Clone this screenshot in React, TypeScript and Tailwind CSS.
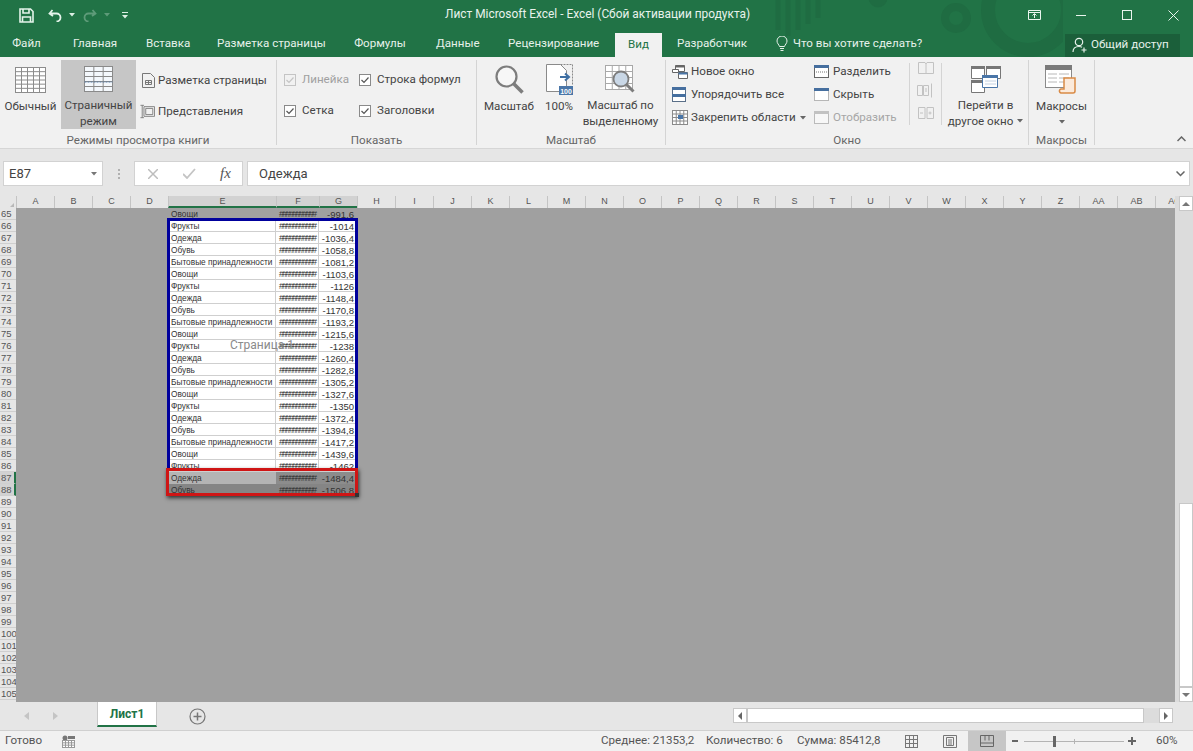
import type { ReactNode } from "react"

const COLS = [
  { n: "A", w: "w-[38px]" }, { n: "B", w: "w-[38px]" }, { n: "C", w: "w-[38px]" }, { n: "D", w: "w-[38px]" },
  { n: "E", w: "w-[108px]", on: true }, { n: "F", w: "w-[43px]", on: true }, { n: "G", w: "w-[38px]", on: true },
  ...["H", "I", "J", "K", "L", "M", "N", "O", "P", "Q", "R", "S", "T", "U", "V", "W", "X", "Y", "Z", "AA", "AB", "AC"].map((n) => ({ n, w: "w-[38px]" })),
]

const ROW_NUMS = Array.from({ length: 41 }, (_, i) => 65 + i)

const NAMES = ["Овощи", "Фрукты", "Одежда", "Обувь", "Бытовые принадлежности"]
const VALUES = ["-991,6", "-1014", "-1036,4", "-1058,8", "-1081,2", "-1103,6", "-1126", "-1148,4", "-1170,8", "-1193,2", "-1215,6", "-1238", "-1260,4", "-1282,8", "-1305,2", "-1327,6", "-1350", "-1372,4", "-1394,8", "-1417,2", "-1439,6", "-1462", "-1484,4", "-1506,8"]

const TABS = [
  { t: "Файл", c: "ml-[12px] w-[29px]" },
  { t: "Главная", c: "ml-[32px] w-[44px]" },
  { t: "Вставка", c: "ml-[29px] w-[42px]" },
  { t: "Разметка страницы", c: "ml-[29px] w-[107px]" },
  { t: "Формулы", c: "ml-[29px] w-[54px]" },
  { t: "Данные", c: "ml-[29px] w-[43px]" },
  { t: "Рецензирование", c: "ml-[29px] w-[91px]" },
]

function Grid({ x, y, w, h, cx, cy, stroke = "#7a7a7a", fill = "#fff" }: { x: number; y: number; w: number; h: number; cx: number; cy: number; stroke?: string; fill?: string }) {
  const v = Array.from({ length: cx - 1 }, (_, i) => x + ((i + 1) * w) / cx)
  const hz = Array.from({ length: cy - 1 }, (_, i) => y + ((i + 1) * h) / cy)
  return (
    <g stroke={stroke} strokeWidth="1" fill="none">
      <rect x={x} y={y} width={w} height={h} fill={fill} />
      {v.map((p) => <path key={p} d={`M${p} ${y}V${y + h}`} />)}
      {hz.map((p) => <path key={p} d={`M${x} ${p}H${x + w}`} />)}
    </g>
  )
}

function Caret({ color = "#666" }: { color?: string }) {
  return <svg width="6" height="4" viewBox="0 0 6 4"><path d="M0 0h6L3 3.5z" fill={color} /></svg>
}

function Check({ off }: { off?: boolean }) {
  return (
    <svg width="12" height="12" viewBox="0 0 12 12" className="shrink-0">
      <rect x=".5" y=".5" width="11" height="11" fill={off ? "#f1f1f1" : "#fff"} stroke={off ? "#c4c4c4" : "#8a8a8a"} />
      <path d="M2.5 6l2.5 2.5 4.5-5" fill="none" stroke={off ? "#c4c4c4" : "#555"} strokeWidth="1.2" />
    </svg>
  )
}

function CheckRow({ label, off }: { label: string; off?: boolean }) {
  return (
    <div className="flex h-[22px] items-center gap-[6px]">
      <Check off={off} />
      <span className={off ? "text-[#a0a0a0]" : ""}>{label}</span>
    </div>
  )
}

function Big({ icon, lines, on, w, caret }: { icon: ReactNode; lines: string[]; on?: boolean; w: string; caret?: boolean }) {
  return (
    <div className={`flex h-[69px] shrink-0 flex-col items-center ${w} ${on ? "bg-[#c6c6c6]" : ""}`}>
      <div className="flex h-[38px] items-center justify-center pt-[1px]">{icon}</div>
      {lines.map((l, i) => (
        <div key={l} className="flex h-[16px] items-center gap-[4px] whitespace-nowrap leading-[16px]">
          {l}
          {caret && i === lines.length - 1 && <Caret />}
        </div>
      ))}
    </div>
  )
}

function Cmd({ icon, label, off, caret, w }: { icon: ReactNode; label: string; off?: boolean; caret?: boolean; w?: string }) {
  return (
    <div className={`flex h-[23px] items-center ${w ?? ""} ${off ? "text-[#a6a6a6]" : ""}`}>
      <span className="flex w-[19px] shrink-0 items-center">{icon}</span>
      <span className="whitespace-nowrap">{label}</span>
      {caret && <span className="ml-[4px] flex"><Caret /></span>}
    </div>
  )
}

function Sep({ h = "h-[85px]" }: { h?: string }) {
  return <div className={`mt-[3px] w-px shrink-0 bg-[#d4d4d4] ${h}`} />
}

function GroupLabel({ children }: { children: ReactNode }) {
  return <div className="flex h-[16px] items-center justify-center whitespace-nowrap text-[#666]">{children}</div>
}

function TitleBar() {
  return (
    <div className="flex h-[30px] items-center text-[#e8f2ec]">
      <div className="flex w-[445px] items-center">
        <svg width="15" height="15" viewBox="0 0 15 15" className="ml-[19px]" fill="none" stroke="#e4f4ea" strokeWidth="1.6">
          <path d="M1 1h10.5L14 3.5V14H1z" />
          <path d="M4 1v4h6V1M3.5 14V9h8v5" />
        </svg>
        <svg width="15" height="13" viewBox="0 0 15 13" className="ml-[14px]" fill="none" stroke="#e4f4ea" strokeWidth="1.8">
          <path d="M4.5 1L1.5 4.5l3.5 2.5M2 4.5h6.5a4 4 0 010 8" />
        </svg>
        <span className="ml-[6px] flex"><Caret color="#dcefe4" /></span>
        <svg width="15" height="13" viewBox="0 0 15 13" className="ml-[7px] opacity-35" fill="none" stroke="#cfe6d8" strokeWidth="1.8">
          <path d="M10.5 1l3 3.5-3.5 2.5M13 4.5H6.5a4 4 0 000 8" />
        </svg>
        <span className="ml-[7px] flex opacity-35"><Caret color="#cfe6d8" /></span>
        <svg width="6" height="7" viewBox="0 0 6 7" className="ml-[12px]">
          <path d="M0 0h6v1H0zM0 3h6L3 6.500z" fill="#dcefe4" />
        </svg>
      </div>
      <div className="w-[583px] whitespace-nowrap text-[11.9px]">Лист Microsoft Excel - Excel (Сбой активации продукта)</div>
      <div className="flex items-center">
        <svg width="13" height="10" viewBox="0 0 13 10" fill="none" stroke="#eaf5ee">
          <path d="M.5.5h12v9H.5zM.5 2.500h12M6.500 8V4M4.500 5.500l2-2 2 2" />
        </svg>
        <svg width="10" height="10" viewBox="0 0 10 10" className="ml-[35px]" stroke="#eaf5ee"><path d="M0 5.500h10" /></svg>
        <svg width="10" height="10" viewBox="0 0 10 10" className="ml-[36px]" fill="none" stroke="#eaf5ee"><rect x=".5" y=".5" width="9" height="9" /></svg>
        <svg width="11" height="11" viewBox="0 0 11 11" className="ml-[36px]" stroke="#eaf5ee"><path d="M.5.5l10 10M10.500.5l-10 10" /></svg>
      </div>
    </div>
  )
}

function TabRow() {
  return (
    <div className="flex h-[27px] items-center text-[11.6px] text-[#e6f1ea]">
      {TABS.map((t) => <span key={t.t} className={`shrink-0 whitespace-nowrap text-center ${t.c}`}>{t.t}</span>)}
      <span className="ml-[16px] mt-[3px] flex h-[24px] w-[47px] shrink-0 items-center justify-center bg-[#f1f1f1] text-[#217346]">Вид</span>
      <span className="ml-[15px] w-[70px] shrink-0 whitespace-nowrap text-center">Разработчик</span>
      <svg width="12" height="15" viewBox="0 0 12 15" className="ml-[29px] shrink-0" fill="none" stroke="#e6f1ea">
        <path d="M3.500 10.500C3 8.500 1 7.500 1 5a5 5 0 0110 0c0 2.500-2 3.500-2.500 5.500zM4 12.500h4M4.500 14.500h3" />
      </svg>
      <span className="ml-[5px] w-[127px] shrink-0 whitespace-nowrap">Что вы хотите сделать?</span>
      <div className="ml-[145px] mt-[3px] flex h-[23px] w-[115px] shrink-0 items-center bg-[#1b5f3a] pl-[7px]">
        <svg width="16" height="16" viewBox="0 0 16 16" fill="none" stroke="#e6f1ea" strokeWidth="1.2">
          <circle cx="7" cy="5" r="3.700" />
          <path d="M1 15c0-3.500 2.500-5.500 6-5.500 1.200 0 2.200.2 3 .7M12 10.500v5M9.500 13h5" />
        </svg>
        <span className="ml-[3px] whitespace-nowrap">Общий доступ</span>
      </div>
    </div>
  )
}

function Ribbon() {
  return (
    <div className="flex h-[92px] items-start border-b border-[#d6d6d6] bg-[#f1f1f1] text-[11.6px] text-[#444]">
      {/* book views */}
      <div className="flex w-[276px] shrink-0 flex-col pt-[3px]">
        <div className="flex h-[73px]">
          <Big w="w-[61px]" lines={["Обычный"]} icon={<svg width="31" height="26" viewBox="0 0 31 26"><Grid x={.5} y={.5} w={30} h={25} cx={5} cy={6} stroke="#8c8c8c" /></svg>} />
          <Big w="w-[75px]" on lines={["Страничный", "режим"]} icon={
            <svg width="29" height="26" viewBox="0 0 29 26">
              <Grid x={.5} y={.5} w={28} h={25} cx={3} cy={5} stroke="#8a8a8a" fill="#f4f8fc" />
              <path d="M.5 16h28" stroke="#5b7fa6" strokeDasharray="2 1" />
            </svg>
          } />
          <div className="flex flex-col pl-[4px] pt-[9px]">
            <div className="flex h-[23px] items-center">
              <svg width="13" height="15" viewBox="0 0 13 15" className="ml-[2px] mr-[3px]" fill="none" stroke="#777">
                <path d="M.5.5h8l4 4v10H.5zM3.500 7.500h6v4h-6zM6.500 7.500v4M3.500 9.500h6" />
              </svg>
              <span className="whitespace-nowrap">Разметка страницы</span>
            </div>
            <div className="mt-[8px] flex h-[23px] items-center">
              <svg width="15" height="15" viewBox="0 0 17 16" className="mr-[3px]" fill="none" stroke="#777">
                <path d="M4.500 2.500h12v11h-12zM6.500 4.500h8v7h-8zM2.500 1v14M.5 1h4M.5 15h4" />
              </svg>
              <span className="whitespace-nowrap">Представления</span>
            </div>
          </div>
        </div>
        <GroupLabel>Режимы просмотра книги</GroupLabel>
      </div>
      <Sep />

      {/* show */}
      <div className="flex w-[199px] shrink-0 flex-col pt-[12px]">
        <div className="flex h-[64px] pl-[7px]">
          <div className="flex w-[75px] flex-col gap-[9px]">
            <CheckRow label="Линейка" off />
            <CheckRow label="Сетка" />
          </div>
          <div className="flex flex-col gap-[9px]">
            <CheckRow label="Строка формул" />
            <CheckRow label="Заголовки" />
          </div>
        </div>
        <GroupLabel>Показать</GroupLabel>
      </div>
      <Sep />

      {/* zoom */}
      <div className="flex w-[188px] shrink-0 flex-col pt-[3px]">
        <div className="flex h-[73px] pl-[3px]">
          <Big w="w-[58px]" lines={["Масштаб"]} icon={
            <svg width="29" height="29" viewBox="0 0 29 29" fill="none" stroke="#7d7d7d">
              <circle cx="11.500" cy="11.500" r="10" strokeWidth="2.200" fill="#f7f7f7" />
              <path d="M18.500 18.500l9 9" strokeWidth="3.500" />
            </svg>
          } />
          <Big w="w-[42px]" lines={["100%"]} icon={
            <svg width="27" height="31" viewBox="0 0 27 31">
              <path d="M.5.500h14l6 6v21H.5z" fill="#fff" stroke="#8a8a8a" />
              <path d="M14.500.5h12v20" fill="none" stroke="#8a8a8a" strokeDasharray="2 1" />
              <path d="M14 13h8M19 9.500l4 3.500-4 3.500" fill="none" stroke="#3f6fa3" strokeWidth="2" />
              <rect x="13" y="22" width="14" height="9" fill="#4a76a8" />
              <text x="20" y="29.500" textAnchor="middle" fontSize="7" fontWeight="700" fill="#fff" fontFamily="Liberation Sans, sans-serif">100</text>
            </svg>
          } />
          <Big w="w-[81px]" lines={["Масштаб по", "выделенному"]} icon={
            <svg width="31" height="29" viewBox="0 0 31 29" fill="none">
              <Grid x={.5} y={.5} w={27} h={24} cx={4} cy={4} stroke="#a8a8a8" />
              <circle cx="16" cy="14" r="7.500" stroke="#7d7d7d" strokeWidth="1.800" fill="#c9d7e6" />
              <path d="M21.500 19.500l7 7" stroke="#7d7d7d" strokeWidth="3" />
            </svg>
          } />
        </div>
        <GroupLabel>Масштаб</GroupLabel>
      </div>
      <Sep />

      {/* window */}
      <div className="flex w-[362px] shrink-0 flex-col pt-[3px]">
        <div className="flex h-[73px]">
          <div className="flex w-[148px] shrink-0 flex-col pl-[6px]">
            <Cmd label="Новое окно" icon={
              <svg width="16" height="14" viewBox="0 0 16 14">
                <path d="M3.500.5h9v6h-9z" fill="#fff" stroke="#666" /><path d="M3.500.5h9v2h-9z" fill="#666" />
                <path d="M.5 4.500h6v3h-6z" fill="#fff" stroke="#666" />
                <path d="M6.500 7.500h9v6h-9z" fill="#fff" stroke="#666" /><path d="M6.500 7.500h9v2h-9z" fill="#4a76a8" />
              </svg>
            } />
            <Cmd label="Упорядочить все" icon={
              <svg width="14" height="15" viewBox="0 0 14 15">
                <rect x=".5" y=".5" width="13" height="14" fill="#fff" stroke="#5a6f88" />
                <path d="M0 0h14v3H0zM0 7h14v3H0z" fill="#466f9f" />
              </svg>
            } />
            <Cmd label="Закрепить области" caret icon={
              <svg width="16" height="15" viewBox="0 0 16 15">
                <Grid x={.5} y={.5} w={15} h={14} cx={4} cy={4} stroke="#8a8a8a" />
                <rect x="6" y="5" width="5" height="4" fill="#4a76a8" />
              </svg>
            } />
          </div>
          <div className="flex w-[95px] shrink-0 flex-col">
            <Cmd w="w-[90px]" label="Разделить" icon={
              <svg width="15" height="13" viewBox="0 0 15 13">
                <rect x=".5" y=".5" width="14" height="12" fill="#fff" stroke="#666" />
                <path d="M0 0h15v3H0z" fill="#466f9f" /><path d="M2 7h11" stroke="#777" strokeDasharray="1 1" />
              </svg>
            } />
            <Cmd label="Скрыть" icon={
              <svg width="15" height="13" viewBox="0 0 15 13">
                <rect x=".5" y=".5" width="14" height="12" fill="#fff" stroke="#777" strokeDasharray="1 1" />
                <path d="M0 0h15v3H0z" fill="#466f9f" />
              </svg>
            } />
            <Cmd off label="Отобразить" icon={
              <svg width="15" height="13" viewBox="0 0 15 13">
                <rect x=".5" y=".5" width="14" height="12" fill="#f7f7f7" stroke="#bbb" />
                <path d="M0 0h15v3H0z" fill="#c2c2c2" />
              </svg>
            } />
          </div>
          <Sep h="h-[62px]" />
          <div className="flex w-[31px] shrink-0 flex-col items-center gap-[9px] pt-[2px]">
            <svg width="16" height="12" viewBox="0 0 16 12" fill="none" stroke="#c2c2c2"><path d="M.5.500h6.500l1 1.500v9.500h-7.500zM8 2l1-1.500h6.500v11H8" /></svg>
            <svg width="17" height="15" viewBox="0 0 17 15" fill="none" stroke="#c2c2c2"><path d="M.5 2.500h5v10h-5zM6.500 2.500h5v10h-5zM8 6h2M8 8h2M14.500.5v14" /></svg>
            <svg width="16" height="12" viewBox="0 0 16 12" fill="none" stroke="#c2c2c2"><path d="M.5.500h6.500v11H.5zM9 .5h6.500v11H9zM2 6h3M10.500 6h3M12 4.500v3" /></svg>
          </div>
          <Sep h="h-[62px]" />
          <Big w="w-[87px]" caret lines={["Перейти в", "другое окно"]} icon={
            <svg width="30" height="27" viewBox="0 0 30 27">
              <path d="M.5.500h13v12H.5zM15.500.5h14v12h-14zM.5 14.500h13v12H.5z" fill="#fff" stroke="#777" />
              <path d="M0 0h14v3H0zM15 0h15v3H15zM0 14h14v3H0z" fill="#777" />
              <path d="M11.500 9.500h15v12h-15z" fill="#fff" stroke="#4a76a8" />
              <path d="M11 9h16v3H11z" fill="#4a76a8" />
              <path d="M14 15h11M14 18h11" stroke="#c4d2e2" />
            </svg>
          } />
        </div>
        <GroupLabel>Окно</GroupLabel>
      </div>
      <Sep />

      {/* macros */}
      <div className="flex w-[65px] shrink-0 flex-col pt-[3px]">
        <div className="flex h-[73px] flex-col items-center">
          <div className="flex h-[38px] items-center pt-[1px]">
            <svg width="33" height="29" viewBox="0 0 33 29">
              <rect x=".5" y=".5" width="26" height="22" fill="#fff" stroke="#8a8a8a" />
              <path d="M0 0h27v5H0z" fill="#7a7a7a" />
              <path d="M3 9h9M14 9h10M3 13h9M14 13h10M3 17h9M14 17h10" stroke="#b8b8b8" />
              <path d="M19 13h11v13a2 2 0 01-2 2H17a2 2 0 01-1-4h3z" fill="#fbeadb" stroke="#d98a45" strokeWidth="1.500" />
            </svg>
          </div>
          <div className="flex h-[16px] items-center leading-[16px]">Макросы</div>
          <div className="flex h-[16px] items-center"><Caret /></div>
        </div>
        <GroupLabel>Макросы</GroupLabel>
      </div>
      <Sep />

      <div className="flex h-[91px] flex-1 items-end justify-end pb-[6px] pr-[7px]">
        <svg width="9" height="6" viewBox="0 0 9 6" fill="none" stroke="#666" strokeWidth="1.500"><path d="M.5 5l4-4 4 4" /></svg>
      </div>
    </div>
  )
}

function FormulaBar() {
  return (
    <div className="flex h-[47px] items-start bg-[#e6e6e6] pt-[12px] text-[14px] text-[#444]">
      <div className="ml-[3px] flex h-[25px] w-[100px] items-center justify-between border border-[#d2d2d2] bg-white pl-[5px] pr-[5px] text-[13px]">
        E87
        <Caret color="#777" />
      </div>
      <div className="flex h-[25px] w-[31px] flex-col items-center justify-center gap-[2px]">
        {[0, 1, 2].map((i) => <span key={i} className="h-[2px] w-[2px] bg-[#b0b0b0]" />)}
      </div>
      <div className="flex h-[25px] w-[109px] items-center border border-[#d2d2d2] bg-white">
        <svg width="10" height="10" viewBox="0 0 10 10" className="ml-[13px]" stroke="#bdbdbd" strokeWidth="1.500"><path d="M0 0l10 10M10 0L0 10" /></svg>
        <svg width="13" height="11" viewBox="0 0 13 11" className="ml-[25px]" fill="none" stroke="#c4c4c4" strokeWidth="1.800"><path d="M0 6l4 4 8-9" /></svg>
        <span className="ml-[24px] font-['Liberation_Serif',serif] text-[15px] italic text-[#555]">fx</span>
      </div>
      <div className="ml-[4px] flex h-[25px] w-[943px] items-center justify-between border border-[#d2d2d2] bg-white pl-[11px] pr-[4px] text-[13px]">
        Одежда
        <svg width="9" height="6" viewBox="0 0 9 6" fill="none" stroke="#666" strokeWidth="1.500"><path d="M.5.500l4 4 4-4" /></svg>
      </div>
    </div>
  )
}

function ColumnHeader() {
  return (
    <div className="flex h-[12px] overflow-hidden bg-[#e6e6e6] font-['Liberation_Sans',sans-serif] text-[9px] leading-[11px] text-[#555]">
      <div className="flex w-[16px] shrink-0 items-end justify-end pb-[1px] pr-[2px]">
        <svg width="4" height="4" viewBox="0 0 4 4"><path d="M4 0v4H0z" fill="#b8b8b8" /></svg>
      </div>
      {COLS.map((c) => (
        <div key={c.n} className={`flex shrink-0 justify-center border-l border-[#c4c4c4] ${c.w} ${c.on ? "border-b-2 border-b-[#217346] bg-[#d2d2d2]" : ""}`}>
          {c.n}
        </div>
      ))}
    </div>
  )
}

function RowHeaders() {
  return (
    <div className="w-[16px] shrink-0 overflow-hidden bg-[#e6e6e6] font-['Liberation_Sans',sans-serif] text-[9.5px] text-[#555]">
      {ROW_NUMS.map((n) => (
        <div key={n} className={`flex h-[12px] items-center border-b border-[#cfcfcf] pl-[1px] leading-[11px] ${n === 87 || n === 88 ? "border-r-2 border-r-[#217346] bg-[#d2d2d2]" : ""}`}>
          {n}
        </div>
      ))}
    </div>
  )
}

function DataRow({ i }: { i: number }) {
  const n = 65 + i
  const first = n === 65
  const sel = n >= 87
  const bg = first ? "" : n === 87 ? "bg-[#8c8c8c]" : n === 88 ? "bg-[#858585]" : "bg-white"
  const line = first || sel ? "border-transparent" : "border-[#cfcfcf]"
  return (
    <div className={`flex h-[12px] w-[189px] leading-[13px] text-[#333] ${bg}`}>
      <div className={`w-[108px] overflow-hidden whitespace-nowrap border-b border-r pl-[3px] text-[8.3px] ${line} ${n === 87 ? "bg-[#b4b4b4]" : ""}`}>{NAMES[i % 5]}</div>
      <div className={`w-[43px] overflow-hidden whitespace-nowrap border-b border-r pl-[3px] text-[9px] tracking-[-1.7px] text-[#333] ${line}`}>###########</div>
      <div className={`w-[38px] border-b pr-[3px] text-right text-[9.5px] ${line}`}>{VALUES[i]}</div>
    </div>
  )
}

function Sheet() {
  return (
    <div className="relative flex-1 overflow-hidden bg-[#a0a0a0] pl-[152px] font-['Liberation_Sans',sans-serif]">
      {VALUES.map((_, i) => <DataRow key={i} i={i} />)}
      {/* print area frame and page watermark */}
      <div className="absolute left-[151px] top-[10px] h-[253px] w-[191px] border-[3px] border-[#00009c]" />
      <div className="absolute left-[214px] top-[130px] font-['Roboto',sans-serif] text-[12px] leading-[14px] text-[#8a8a8a]">Страница 1</div>
      <div className="absolute left-[150px] top-[260px] h-[28px] w-[192px] border-[3px] border-[#cf1515] shadow-[1px_2px_4px_rgba(0,0,0,0.7)]" />
      <div className="absolute left-[339px] top-[285px] h-[4px] w-[4px] bg-[#333]" />
    </div>
  )
}

function ScrollBtn({ up }: { up?: boolean }) {
  return (
    <div className="flex h-[15px] w-[14px] shrink-0 items-center justify-center border border-[#c8c8c8] bg-white">
      <svg width="8" height="4" viewBox="0 0 8 4"><path d={up ? "M0 4h8L4 0z" : "M0 0h8L4 4z"} fill="#777" /></svg>
    </div>
  )
}

function ScrollBar() {
  return (
    <div className="flex w-[18px] shrink-0 flex-col items-end bg-[#dcdcdc] pl-[3px]">
      <ScrollBtn up />
      <div className="flex-1" />
      <div className="h-[184px] w-[14px] border border-[#c8c8c8] bg-white" />
      <ScrollBtn />
    </div>
  )
}

function SheetBar() {
  return (
    <div className="flex h-[28px] items-start bg-[#e6e6e6] text-[12px]">
      <svg width="5" height="8" viewBox="0 0 5 8" className="ml-[24px] mt-[10px]"><path d="M5 0v8L0 4z" fill="#c4c4c4" /></svg>
      <svg width="5" height="8" viewBox="0 0 5 8" className="ml-[24px] mt-[10px]"><path d="M0 0v8l5-4z" fill="#c4c4c4" /></svg>
      <div className="ml-[39px] flex h-[25px] w-[60px] items-center justify-center border-b-2 border-x border-x-[#c8c8c8] border-b-[#217346] bg-white font-bold text-[#217346]">
        Лист1
      </div>
      <svg width="17" height="17" viewBox="0 0 17 17" className="ml-[32px] mt-[6px]" fill="none" stroke="#777">
        <circle cx="8.500" cy="8.500" r="7.500" strokeWidth="1.200" />
        <path d="M8.500 4.500v8M4.500 8.500h8" strokeWidth="1.500" />
      </svg>
      <div className="ml-[527px] mt-[6px] flex h-[15px] items-center">
        <div className="flex h-[15px] w-[14px] items-center justify-center border border-[#c8c8c8] bg-white">
          <svg width="4" height="8" viewBox="0 0 4 8"><path d="M4 0v8L0 4z" fill="#666" /></svg>
        </div>
        <div className="h-[15px] w-[397px] border border-[#c8c8c8] bg-white" />
        <div className="h-[15px] w-[15px] bg-[#dcdcdc]" />
        <div className="flex h-[15px] w-[14px] items-center justify-center border border-[#c8c8c8] bg-white">
          <svg width="4" height="8" viewBox="0 0 4 8"><path d="M0 0v8l4-4z" fill="#666" /></svg>
        </div>
      </div>
    </div>
  )
}

function StatusBar() {
  return (
    <div className="flex h-[21px] items-center border-t border-[#d0d0d0] bg-[#f1f1f1] text-[11.6px] text-[#555]">
      <span className="ml-[5px] w-[57px]">Готово</span>
      <svg width="13" height="13" viewBox="0 0 13 13">
        <circle cx="3" cy="3" r="2.500" fill="#777" />
        <path d="M6 1h7v3H6z" fill="#777" />
        <Grid x={.5} y={5.500} w={12} h={7} cx={4} cy={3} stroke="#999" />
      </svg>
      <span className="ml-[526px] w-[105px] whitespace-nowrap">Среднее: 21353,2</span>
      <span className="w-[91px] whitespace-nowrap">Количество: 6</span>
      <span className="w-[108px] whitespace-nowrap">Сумма: 85412,8</span>
      <svg width="13" height="13" viewBox="0 0 13 13"><Grid x={.5} y={.5} w={12} h={12} cx={3} cy={3} stroke="#777" fill="none" /></svg>
      <svg width="14" height="13" viewBox="0 0 14 13" className="ml-[25px]" fill="none" stroke="#777">
        <path d="M.5.500h13v12H.5zM3.500 2.500h7v8h-7zM5 5h4M5 7h4M5 9h4" />
      </svg>
      <div className="ml-[11px] flex h-[20px] w-[38px] items-center justify-center bg-[#c6c6c6]">
        <svg width="14" height="12" viewBox="0 0 14 12" fill="none" stroke="#666"><path d="M.5.500h13v11H.5zM.5 8h13M5 .5v5M9 .5v5" /></svg>
      </div>
      <svg width="6" height="2" viewBox="0 0 6 2" className="ml-[6px]"><path d="M0 0h6v2H0z" fill="#666" /></svg>
      <div className="relative ml-[6px] flex h-[11px] w-[100px] items-center">
        <div className="h-px w-full bg-[#b4b4b4]" />
        <div className="absolute left-[50px] h-[5px] w-px bg-[#b4b4b4]" />
        <div className="absolute left-[29px] h-[11px] w-[3px] bg-[#666]" />
      </div>
      <svg width="8" height="8" viewBox="0 0 8 8" className="ml-[4px]"><path d="M3 0h2v3h3v2H5v3H3V5H0V3h3z" fill="#666" /></svg>
      <span className="ml-[20px]">60%</span>
    </div>
  )
}

export default function App() {
  return (
    <div className="flex h-[751px] w-[1193px] flex-col overflow-hidden bg-[#e6e6e6] font-['Roboto',sans-serif]">
      <header className="relative bg-[#217346]">
        <svg width="300" height="57" viewBox="0 0 300 57" className="absolute right-[130px] top-0" fill="none" stroke="#1f6c42">
          <circle cx="193" cy="18" r="11" strokeWidth="8" />
          <circle cx="265" cy="10" r="40" strokeWidth="14" />
          <path d="M15 0v30M25 0v36M35 0v30M45 0v24M55 0v18" strokeWidth="5" />
          <circle cx="115" cy="-2" r="9" fill="#1f6c42" />
        </svg>
        <div className="relative">
          <TitleBar />
          <TabRow />
        </div>
      </header>
      <Ribbon />
      <FormulaBar />
      <div className="flex h-[506px]">
        <div className="flex min-w-0 flex-1 flex-col">
          <ColumnHeader />
          <div className="flex h-[494px]">
            <RowHeaders />
            <Sheet />
          </div>
        </div>
        <ScrollBar />
      </div>
      <SheetBar />
      <StatusBar />
    </div>
  )
}
